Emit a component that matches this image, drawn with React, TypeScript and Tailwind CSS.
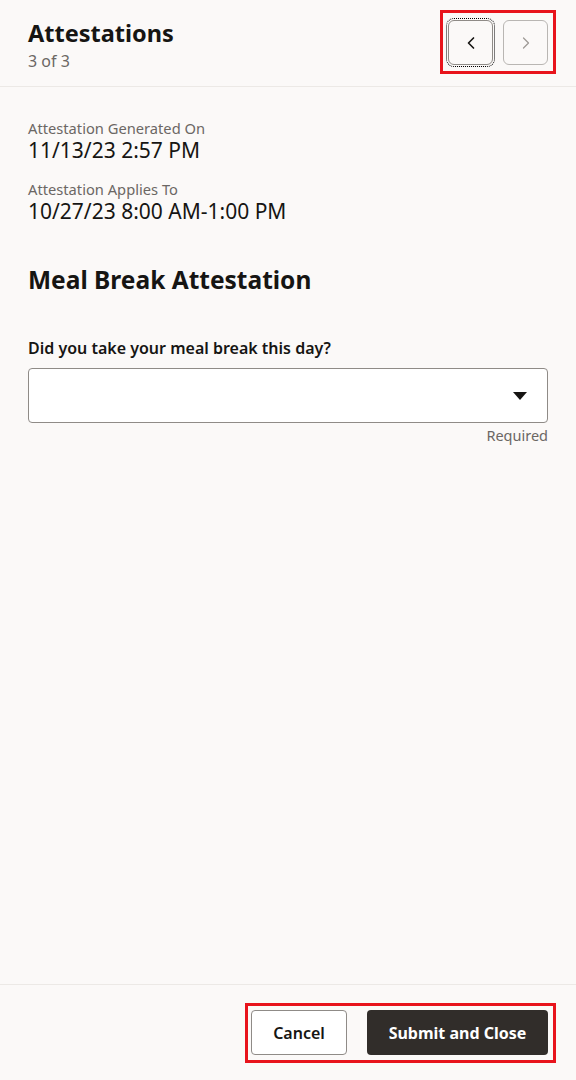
import { ChevronLeft, ChevronRight } from 'lucide-react';

// Attestation drawer, page 3 of 3

const FONT = { fontFamily: '"Noto Sans", Lato, sans-serif' };

function Field({ label, value }: { label: string; value: string }) {
  return (
    <div className="flex flex-col">
      <span className="text-[14.7px] leading-[18px] text-[#6b6764]">{label}</span>
      <span className="text-[21px] leading-[27px] text-[#161513]">{value}</span>
    </div>
  );
}

export default function App() {
  return (
    <div style={FONT} className="w-[576px] h-[1080px] flex flex-col bg-[#fbf9f8] text-[#161513]">
      {/* Header */}
      <div className="h-[87px] flex items-start justify-between pl-7 pr-5 border-b border-[#ece9e6]">
        <div className="flex flex-col pt-[18px]">
          <h1 className="text-[23.5px] leading-[30px] font-bold">Attestations</h1>
          <span className="mt-[2px] text-[16px] leading-[22px] text-[#6b6764]">3 of 3</span>
        </div>
        <div className="mt-[10px] flex gap-[10px] border-[3px] border-[#e8141c] px-[5px] pt-[7px] pb-[6px]">
          <button className="w-[45px] h-[45px] flex items-center justify-center rounded-[6px] border border-[#8f8b87] outline outline-1 outline-dotted outline-black outline-offset-[1px]">
            <ChevronLeft size={20} strokeWidth={2} className="text-[#161513]" />
          </button>
          <button className="w-[45px] h-[45px] flex items-center justify-center rounded-[6px] border border-[#b9b6b3]">
            <ChevronRight size={20} strokeWidth={1.5} className="text-[#9e9a96]" />
          </button>
        </div>
      </div>

      {/* Body */}
      <div className="flex-1 flex flex-col px-7 pt-[32px]">
        <div className="flex flex-col gap-[16px]">
          <Field label="Attestation Generated On" value="11/13/23 2:57 PM" />
          <Field label="Attestation Applies To" value="10/27/23 8:00 AM-1:00 PM" />
        </div>

        <h2 className="mt-[39px] text-[24.5px] leading-[32px] font-bold">Meal Break Attestation</h2>

        <label className="mt-[41px] text-[16px] leading-[22px] font-semibold">
          Did you take your meal break this day?
        </label>
        <div className="mt-[9px] h-[55px] flex items-center justify-end pr-[20px] bg-white border border-[#8f8b87] rounded-[4px]">
          <svg width="14" height="8" viewBox="0 0 14 8">
            <path d="M0 0 L14 0 L7 8 Z" fill="#161513" />
          </svg>
        </div>
        <span className="mt-[2px] self-end text-[14.5px] leading-[20px] text-[#6b6764]">Required</span>
      </div>

      {/* Footer */}
      <div className="h-[96px] flex items-start justify-end pr-5 border-t border-[#ece9e6]">
        <div className="mt-[18px] flex gap-[20px] border-[3px] border-[#e8141c] pl-[3px] pr-[5px] pt-[4px] pb-[5px]">
          <button className="w-[96px] h-[45px] rounded-[4px] border border-[#8f8b87] bg-white text-[16px] font-semibold text-[#161513]">
            Cancel
          </button>
          <button className="w-[181px] h-[45px] rounded-[4px] bg-[#312d2a] text-[16px] font-bold text-white">
            Submit and Close
          </button>
        </div>
      </div>
    </div>
  );
}
